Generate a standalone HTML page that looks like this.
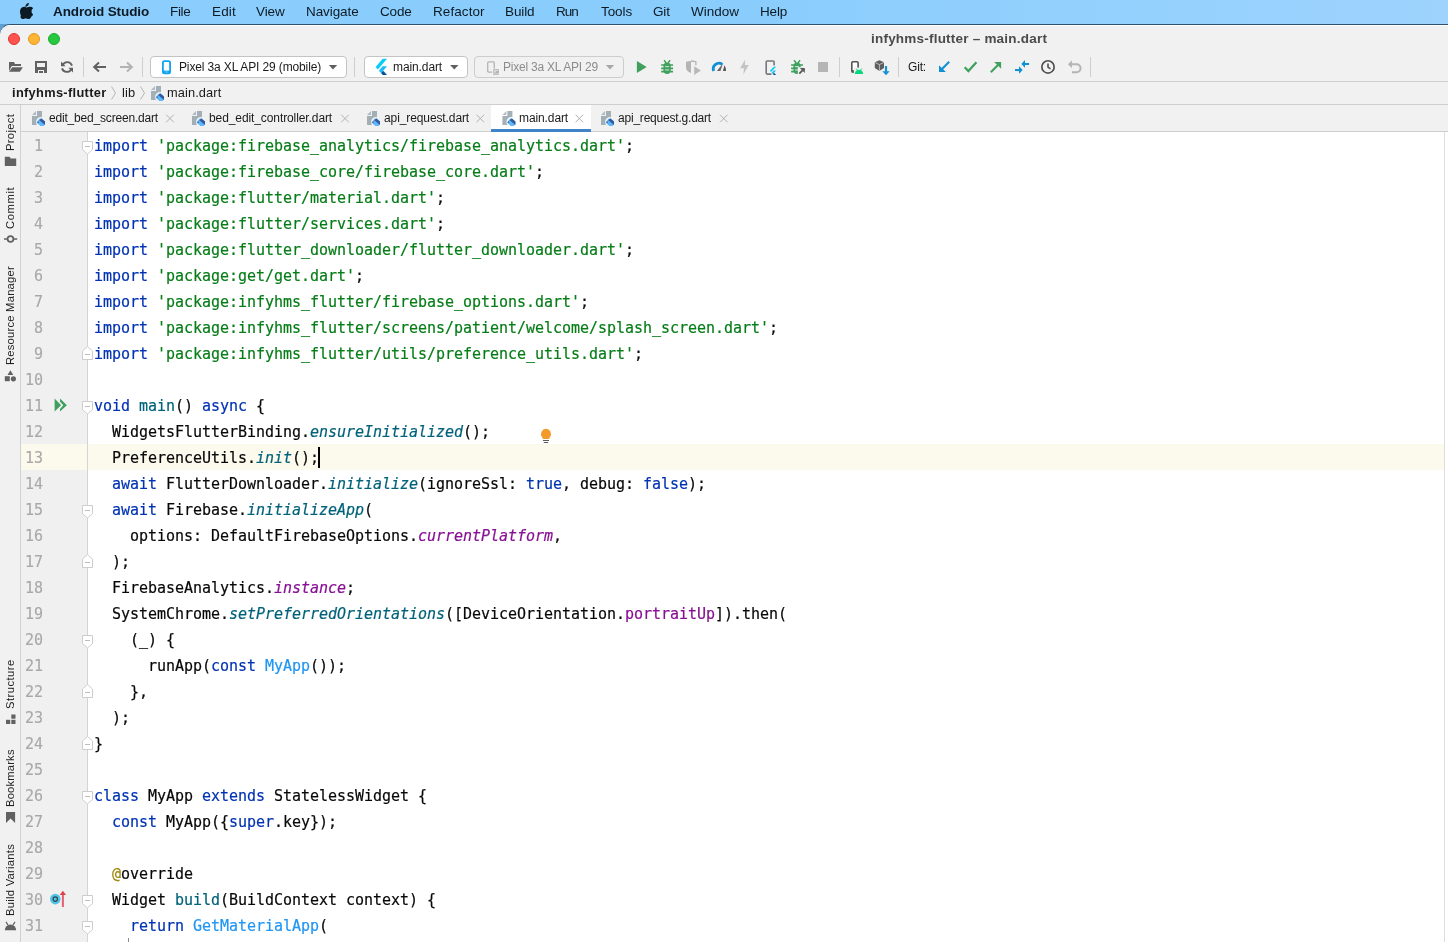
<!DOCTYPE html>
<html lang="en"><head><meta charset="utf-8"><title>infyhms-flutter – main.dart</title>
<style>
*{box-sizing:border-box}
html,body{margin:0;padding:0}
body{width:1448px;height:942px;position:relative;overflow:hidden;background:#f2f2f2;font-family:"Liberation Sans",sans-serif;color:#1a1a1a;-webkit-font-smoothing:antialiased}
.abs{position:absolute}
.t,.vt,.ln,.cl{will-change:transform}
.t{position:absolute;white-space:pre;line-height:1}
#menubar{position:absolute;left:0;top:0;width:1448px;height:24px;background:linear-gradient(90deg,#8bcefd 0%,#89cdfd 50%,#9dd3fd 100%)}
#menubar .t{font-size:13.5px;color:#0d1a24;top:5px}
#wall{position:absolute;left:0;top:24px;width:1448px;height:14px;background:#5e9fd2}
#win{position:absolute;left:0;top:24px;width:1448px;height:918px;background:#f1f1f1;border-top-left-radius:10px;border-top-right-radius:0;border-top:1px solid #2d506e;overflow:hidden}
#win:before{content:"";position:absolute;left:0;top:0;width:100%;height:1px;background:#fff}
.hl{position:absolute;left:0;width:1448px;height:1px;background:#cecece}
.sep{position:absolute;width:1px;background:#cfcfcf;top:57px;height:20px}
.combo{position:absolute;top:56px;height:22px;border:1px solid #c4c4c4;border-radius:4px;background:#fff}
.ui{font-size:12.5px;color:#1a1a1a}
.vt{position:absolute;white-space:pre;font-size:12px;line-height:1;color:#1a1a1a;transform-origin:0 0;transform:rotate(-90deg)}
#gutter{position:absolute;left:21px;top:132px;width:66px;height:810px;background:#f0f0f0}
#gline{position:absolute;left:87px;top:132px;width:1px;height:810px;background:#d4d4d4}
#code{position:absolute;left:88px;top:132px;width:1356px;height:810px;background:#fff}
#rline{position:absolute;left:1444px;top:132px;width:1px;height:810px;background:#dedede}
#rbar{position:absolute;left:1445px;top:132px;width:3px;height:810px;background:#fff}
.ln{position:absolute;left:21px;width:22px;text-align:right;font:15px/26px "DejaVu Sans Mono",monospace;letter-spacing:-0.031px;color:#a8a8a8;height:26px;-webkit-text-stroke:0.15px}
.cl{position:absolute;left:94px;white-space:pre;font:15px/26px "DejaVu Sans Mono",monospace;letter-spacing:-0.031px;color:#080808;height:26px;-webkit-text-stroke:0.2px}
.k{color:#0033b3}.s{color:#067d17}.f{color:#00627a}.m{color:#00627a;font-style:italic}.p{color:#871094;font-style:italic}.e{color:#871094}.c{color:#2196f3}.a{color:#9e880d}
</style></head>
<body>
<div id="menubar"></div>
<div id="wall"></div>
<div id="win"></div>
<svg class="abs" style="left:19.800px;top:2.800px" width="13.600" height="16.200" viewBox="-1 0 171 206" preserveAspectRatio="none"><path fill="#0d1a24" d="M150.4 160.6c-3.100 7.200-6.800 13.800-11.100 19.900-5.900 8.300-10.700 14.100-14.400 17.300-5.700 5.300-11.900 8-18.500 8.100-4.700 0-10.400-1.300-17.100-4.100-6.700-2.700-12.800-4.100-18.400-4.100-5.900 0-12.200 1.300-18.900 4.100-6.700 2.700-12.200 4.200-16.300 4.300-6.300.3-12.600-2.500-18.900-8.400-4-3.500-9-9.500-15.100-18C15.200 170.500 9.900 160 5.700 148 1.200 135 -1 122.500 -1 110.300c0-13.900 3-25.900 9-36 4.700-8.100 11-14.400 18.800-19.100 7.800-4.700 16.300-7 25.400-7.200 5 0 11.600 1.500 19.700 4.600 8.100 3 13.300 4.600 15.600 4.600 1.700 0 7.500-1.800 17.300-5.400 9.300-3.300 17.100-4.700 23.500-4.200 17.400 1.400 30.400 8.200 39.100 20.600-15.500 9.400-23.200 22.600-23.100 39.500.1 13.200 4.900 24.100 14.300 32.800 4.300 4 9 7.200 14.300 9.400-1.100 3.300-2.400 6.500-3.600 9.600zM110.600 4.100c0 10.300-3.800 20-11.300 28.900-9.100 10.600-20 16.700-31.900 15.700-.2-1.200-.200-2.500-.200-3.900 0-9.900 4.300-20.500 12-29.200 3.800-4.400 8.700-8 14.600-10.900C99.700 1.800 105.300.2 110.500 0c.1 1.400.1 2.700.1 4.100z"/></svg>
<div class="abs" style="left:8px;top:33px;width:12px;height:12px;border-radius:6px;background:#fe5450;border:0.5px solid #e0352f"></div>
<div class="abs" style="left:28px;top:33px;width:12px;height:12px;border-radius:6px;background:#feb436;border:0.5px solid #de9b1c"></div>
<div class="abs" style="left:48px;top:33px;width:12px;height:12px;border-radius:6px;background:#27c83f;border:0.5px solid #1aab29"></div>
<div class="hl" style="top:81px"></div>
<div class="hl" style="top:104px"></div>
<div class="hl" style="top:131px;left:21px;width:1427px"></div>
<div class="sep" style="left:83px"></div>
<div class="sep" style="left:142px"></div>
<div class="sep" style="left:354px"></div>
<div class="sep" style="left:839px"></div>
<div class="sep" style="left:898px"></div>
<div class="sep" style="left:1090px"></div>
<div class="combo" style="left:150px;width:197px"></div>
<div class="combo" style="left:364px;width:104px"></div>
<div class="combo" style="left:474px;width:150px;background:#f1f1f1;border-color:#cdcdcd"></div>
<div class="abs" style="left:491px;top:105px;width:100px;height:26px;background:#fff"></div>
<div class="abs" style="left:491px;top:129px;width:100px;height:3px;background:#4083c9"></div>
<div class="abs" style="left:20px;top:105px;width:1px;height:837px;background:#d1d1d1"></div>
<div class="t" style="left:53.00px;top:4.74px;font-size:13.5px;font-weight:700;color:#0d1a24;letter-spacing:-0.099px;">Android Studio</div>
<div class="t" style="left:170.00px;top:4.74px;font-size:13.5px;font-weight:400;color:#0d1a24;letter-spacing:-0.355px;">File</div>
<div class="t" style="left:211.50px;top:4.74px;font-size:13.5px;font-weight:400;color:#0d1a24;letter-spacing:0.145px;">Edit</div>
<div class="t" style="left:256.00px;top:4.74px;font-size:13.5px;font-weight:400;color:#0d1a24;letter-spacing:-0.110px;">View</div>
<div class="t" style="left:306.00px;top:4.74px;font-size:13.5px;font-weight:400;color:#0d1a24;letter-spacing:-0.085px;">Navigate</div>
<div class="t" style="left:380.20px;top:4.74px;font-size:13.5px;font-weight:400;color:#0d1a24;letter-spacing:-0.160px;">Code</div>
<div class="t" style="left:432.70px;top:4.74px;font-size:13.5px;font-weight:400;color:#0d1a24;letter-spacing:0.081px;">Refactor</div>
<div class="t" style="left:505.40px;top:4.74px;font-size:13.5px;font-weight:400;color:#0d1a24;letter-spacing:-0.108px;">Build</div>
<div class="t" style="left:556.40px;top:4.74px;font-size:13.5px;font-weight:400;color:#0d1a24;letter-spacing:-1.033px;">Run</div>
<div class="t" style="left:600.50px;top:4.74px;font-size:13.5px;font-weight:400;color:#0d1a24;letter-spacing:-0.079px;">Tools</div>
<div class="t" style="left:653.00px;top:4.74px;font-size:13.5px;font-weight:400;color:#0d1a24;letter-spacing:-0.183px;">Git</div>
<div class="t" style="left:691.00px;top:4.74px;font-size:13.5px;font-weight:400;color:#0d1a24;letter-spacing:-0.023px;">Window</div>
<div class="t" style="left:760.00px;top:4.74px;font-size:13.5px;font-weight:400;color:#0d1a24;letter-spacing:-0.189px;">Help</div>
<div class="t" style="left:871.00px;top:31.94px;font-size:13.5px;font-weight:700;color:#4b4b4b;letter-spacing:0.216px;">infyhms-flutter – main.dart</div>
<div class="t" style="left:178.50px;top:60.90px;font-size:12px;font-weight:400;color:#1a1a1a;letter-spacing:-0.132px;">Pixel 3a XL API 29 (mobile)</div>
<div class="t" style="left:392.50px;top:60.90px;font-size:12px;font-weight:400;color:#1a1a1a;letter-spacing:-0.104px;">main.dart</div>
<div class="t" style="left:502.50px;top:60.90px;font-size:12px;font-weight:400;color:#8c8c8c;letter-spacing:-0.221px;">Pixel 3a XL API 29</div>
<div class="t" style="left:907.50px;top:60.90px;font-size:12px;font-weight:400;color:#1a1a1a;letter-spacing:-0.157px;">Git:</div>
<div class="t" style="left:11.50px;top:86.74px;font-size:12.8px;font-weight:700;color:#1a1a1a;letter-spacing:0.329px;">infyhms-flutter</div>
<div class="t" style="left:121.50px;top:86.74px;font-size:12.8px;font-weight:400;color:#1a1a1a;letter-spacing:0.194px;">lib</div>
<div class="t" style="left:166.50px;top:86.74px;font-size:12.8px;font-weight:400;color:#1a1a1a;letter-spacing:0.107px;">main.dart</div>
<div class="t" style="left:48.50px;top:111.60px;font-size:12px;font-weight:400;color:#1a1a1a;letter-spacing:-0.187px;">edit_bed_screen.dart</div>
<div class="t" style="left:208.50px;top:111.60px;font-size:12px;font-weight:400;color:#1a1a1a;letter-spacing:-0.097px;">bed_edit_controller.dart</div>
<div class="t" style="left:383.50px;top:111.60px;font-size:12px;font-weight:400;color:#1a1a1a;letter-spacing:-0.102px;">api_request.dart</div>
<div class="t" style="left:518.50px;top:111.60px;font-size:12px;font-weight:400;color:#1a1a1a;letter-spacing:-0.104px;">main.dart</div>
<div class="t" style="left:617.50px;top:111.60px;font-size:12px;font-weight:400;color:#1a1a1a;letter-spacing:-0.208px;">api_request.g.dart</div>
<div class="vt" style="left:4.600px;top:150.50px;font-size:11.2px;letter-spacing:0.329px">Project</div>
<div class="vt" style="left:4.600px;top:228.90px;font-size:11.2px;letter-spacing:0.611px">Commit</div>
<div class="vt" style="left:4.600px;top:364.90px;font-size:11.2px;letter-spacing:0.236px">Resource Manager</div>
<div class="vt" style="left:4.600px;top:708.60px;font-size:11.2px;letter-spacing:0.476px">Structure</div>
<div class="vt" style="left:4.600px;top:806.50px;font-size:11.2px;letter-spacing:0.191px">Bookmarks</div>
<div class="vt" style="left:4.600px;top:915.90px;font-size:11.2px;letter-spacing:0.277px">Build Variants</div>
<div id="gutter"></div><div id="code"></div><div id="gline"></div><div id="rline"></div><div id="rbar"></div>
<div class="abs" style="left:21px;top:444px;width:66px;height:26px;background:#fcfaed"></div>
<div class="abs" style="left:88px;top:444px;width:1356px;height:26px;background:#fcfaed"></div>
<div class="ln" style="top:133px">1</div>
<div class="cl" style="top:133px"><span class="k">import</span> <span class="s">'package:firebase_analytics/firebase_analytics.dart'</span>;</div>
<div class="ln" style="top:159px">2</div>
<div class="cl" style="top:159px"><span class="k">import</span> <span class="s">'package:firebase_core/firebase_core.dart'</span>;</div>
<div class="ln" style="top:185px">3</div>
<div class="cl" style="top:185px"><span class="k">import</span> <span class="s">'package:flutter/material.dart'</span>;</div>
<div class="ln" style="top:211px">4</div>
<div class="cl" style="top:211px"><span class="k">import</span> <span class="s">'package:flutter/services.dart'</span>;</div>
<div class="ln" style="top:237px">5</div>
<div class="cl" style="top:237px"><span class="k">import</span> <span class="s">'package:flutter_downloader/flutter_downloader.dart'</span>;</div>
<div class="ln" style="top:263px">6</div>
<div class="cl" style="top:263px"><span class="k">import</span> <span class="s">'package:get/get.dart'</span>;</div>
<div class="ln" style="top:289px">7</div>
<div class="cl" style="top:289px"><span class="k">import</span> <span class="s">'package:infyhms_flutter/firebase_options.dart'</span>;</div>
<div class="ln" style="top:315px">8</div>
<div class="cl" style="top:315px"><span class="k">import</span> <span class="s">'package:infyhms_flutter/screens/patient/welcome/splash_screen.dart'</span>;</div>
<div class="ln" style="top:341px">9</div>
<div class="cl" style="top:341px"><span class="k">import</span> <span class="s">'package:infyhms_flutter/utils/preference_utils.dart'</span>;</div>
<div class="ln" style="top:367px">10</div>
<div class="ln" style="top:393px">11</div>
<div class="cl" style="top:393px"><span class="k">void</span> <span class="f">main</span>() <span class="k">async</span> {</div>
<div class="ln" style="top:419px">12</div>
<div class="cl" style="top:419px">  WidgetsFlutterBinding.<span class="m">ensureInitialized</span>();</div>
<div class="ln" style="top:445px">13</div>
<div class="cl" style="top:445px">  PreferenceUtils.<span class="m">init</span>();</div>
<div class="ln" style="top:471px">14</div>
<div class="cl" style="top:471px">  <span class="k">await</span> FlutterDownloader.<span class="m">initialize</span>(ignoreSsl: <span class="k">true</span>, debug: <span class="k">false</span>);</div>
<div class="ln" style="top:497px">15</div>
<div class="cl" style="top:497px">  <span class="k">await</span> Firebase.<span class="m">initializeApp</span>(</div>
<div class="ln" style="top:523px">16</div>
<div class="cl" style="top:523px">    options: DefaultFirebaseOptions.<span class="p">currentPlatform</span>,</div>
<div class="ln" style="top:549px">17</div>
<div class="cl" style="top:549px">  );</div>
<div class="ln" style="top:575px">18</div>
<div class="cl" style="top:575px">  FirebaseAnalytics.<span class="p">instance</span>;</div>
<div class="ln" style="top:601px">19</div>
<div class="cl" style="top:601px">  SystemChrome.<span class="m">setPreferredOrientations</span>([DeviceOrientation.<span class="e">portraitUp</span>]).then(</div>
<div class="ln" style="top:627px">20</div>
<div class="cl" style="top:627px">    (_) {</div>
<div class="ln" style="top:653px">21</div>
<div class="cl" style="top:653px">      runApp(<span class="k">const</span> <span class="c">MyApp</span>());</div>
<div class="ln" style="top:679px">22</div>
<div class="cl" style="top:679px">    },</div>
<div class="ln" style="top:705px">23</div>
<div class="cl" style="top:705px">  );</div>
<div class="ln" style="top:731px">24</div>
<div class="cl" style="top:731px">}</div>
<div class="ln" style="top:757px">25</div>
<div class="ln" style="top:783px">26</div>
<div class="cl" style="top:783px"><span class="k">class</span> MyApp <span class="k">extends</span> StatelessWidget {</div>
<div class="ln" style="top:809px">27</div>
<div class="cl" style="top:809px">  <span class="k">const</span> MyApp({<span class="k">super</span>.key});</div>
<div class="ln" style="top:835px">28</div>
<div class="ln" style="top:861px">29</div>
<div class="cl" style="top:861px">  <span class="a">@</span>override</div>
<div class="ln" style="top:887px">30</div>
<div class="cl" style="top:887px">  Widget <span class="f">build</span>(BuildContext context) {</div>
<div class="ln" style="top:913px">31</div>
<div class="cl" style="top:913px">    <span class="k">return</span> <span class="c">GetMaterialApp</span>(</div>
<div class="abs" style="left:318px;top:447px;width:2px;height:21px;background:#000"></div>
<div class="abs" style="left:128px;top:938px;width:1px;height:4px;background:#8a8a8a"></div>
<svg class="abs" style="left:0;top:0" width="1448" height="942" viewBox="0 0 1448 942">
<path d="M9 62h5l1 2h6v2h-9.300l-2.700 5z" fill="#616161"/><path d="M12.300 67.300h10.600l-3 4.400H9z" fill="#616161"/>
<path d="M35 61h12v12H35z M37 63v4h8v-4z M38 70v3h6v-3z" fill="#616161" fill-rule="evenodd"/><rect x="39" y="71" width="4" height="2" fill="#616161"/>
<g fill="none" stroke="#616161" stroke-width="1.900"><path d="M62.600 65.200A5 5 0 0 1 72 65.600"/><path d="M71.400 68.800A5 5 0 0 1 62 68.400"/></g><path d="M61 61.400v4.800h4.600z" fill="#616161"/><path d="M73 72.600v-4.800h-4.600z" fill="#616161"/>
<path d="M106 67H94.500M99 62.600L94.200 67l4.800 4.400" fill="none" stroke="#616161" stroke-width="2"/>
<path d="M120 67h11.500M127 62.600l4.800 4.400-4.800 4.400" fill="none" stroke="#b2b2b2" stroke-width="2"/>
<rect x="162.900" y="61.100" width="7.200" height="12.200" rx="1.600" fill="#fff" stroke="#0fa4f0" stroke-width="1.800"/><rect x="163" y="70.600" width="7" height="2.800" fill="#0fa4f0"/><rect x="165.600" y="71.600" width="1.800" height=".8" fill="#bfe6fb"/>
<path d="M328.8 65h8.400l-4.200 4.600z" fill="#5f5f5f"/>
<path d="M450.1 65h8.400l-4.200 4.600z" fill="#5f5f5f"/>
<path d="M605.8 65h8.400l-4.200 4.600z" fill="#a9a9a9"/>
<g transform="translate(375.6 58.8) scale(0.59 0.675) translate(-2.300 0)"><path d="M14.314 0L2.300 12 6 15.700 21.684.013z" fill="#05cdf9"/><path d="M14.328 11.072L7.857 17.530l3.690 3.690L21.700 11.072z" fill="#17bbfc"/><path d="M11.547 21.220L14.327 24H21.700l-6.460-6.468z" fill="#02539a"/></g>
<path d="M494.300 68.500V63a1.100 1.100 0 0 0-1.100-1.100h-4.400a1.100 1.100 0 0 0-1.100 1.100v8a1.100 1.100 0 0 0 1.100 1.100h3.400" fill="none" stroke="#b4b4b4" stroke-width="1.300"/><rect x="493.800" y="69.700" width="4.500" height="3.300" fill="none" stroke="#b4b4b4" stroke-width="1.100"/><rect x="495.500" y="71" width="2.600" height="2" fill="#b4b4b4"/><rect x="493" y="73.800" width="5.800" height="1" fill="#b4b4b4"/>
<path d="M636.900 61v11.900l9.800-6z" fill="#40a05e"/>
<g transform="translate(0.05 0)"><rect x="663.400" y="62.500" width="7.300" height="11.400" rx="3.600" fill="#40a05e"/><g stroke="#40a05e" stroke-width="1.500" fill="none"><path d="M664 60.300l2.200 2.700M670.100 60.300l-2.200 2.700"/></g><g stroke="#40a05e" stroke-width="1.700" fill="none"><path d="M661.100 65h11.900M661.100 68.300h11.900M661.100 71.600h11.900"/></g><rect x="665.100" y="66.200" width="3.900" height=".9" fill="#e3f1e7"/><rect x="665.100" y="69.500" width="3.900" height=".9" fill="#e3f1e7"/></g>
<path d="M686 61.800q2.500-.8 5-.8v11.900q-5-1.600-5-6z" fill="#b4b4b4"/><path d="M691 61q2.500 0 4.900.8v3.400" fill="none" stroke="#b4b4b4" stroke-width="1.300"/><path d="M694.200 66.200v8.700l6.700-4.400z" fill="#b8b8b8"/>
<path d="M713.640 70.950A5.700 5.700 0 0 1 722.270 64.330" fill="none" stroke="#0f90d3" stroke-width="2.800"/><path d="M716.900 70.900l6.100-7.700-2.600 7.700z" fill="#666"/><path d="M724.300 65.200q1.900 2.400 1.800 5.700h-3.200q.900-2.700 1.400-5.700z" fill="#5a5a5a"/>
<path d="M745.200 59.500L740 68.300h4l-.7 6.100 5.500-9.300h-3.900z" fill="#c4c4c4"/>
<path d="M774.100 65.400V62a1 1 0 0 0-1-1h-5.900a1 1 0 0 0-1 1v11.100a1 1 0 0 0 1 1h4.300" fill="none" stroke="#75787d" stroke-width="1.600"/>
<g transform="translate(769.9 66.7) scale(0.32 0.342) translate(-2.300 0)"><path d="M14.314 0L2.300 12 6 15.700 21.684.013z" fill="#05cdf9"/><path d="M14.328 11.072L7.857 17.530l3.690 3.690L21.700 11.072z" fill="#17bbfc"/><path d="M11.547 21.220L14.327 24H21.700l-6.460-6.468z" fill="#02539a"/></g>
<g transform="translate(130 0)"><rect x="663.400" y="62.500" width="7.300" height="11.400" rx="3.600" fill="#40a05e"/><g stroke="#40a05e" stroke-width="1.500" fill="none"><path d="M664 60.300l2.200 2.700M670.100 60.300l-2.200 2.700"/></g><g stroke="#40a05e" stroke-width="1.700" fill="none"><path d="M661.100 65h11.900M661.100 68.300h11.900M661.100 71.600h11.900"/></g><rect x="665.100" y="66.200" width="3.900" height=".9" fill="#e3f1e7"/><rect x="665.100" y="69.500" width="3.900" height=".9" fill="#e3f1e7"/></g>
<path d="M797.800 67.200h8v8h-8z" fill="#f1f1f1"/>
<path d="M799.300 73.600L804 68.900" stroke="#5a5a5a" stroke-width="1.900" fill="none"/><path d="M799.800 68h5v5z" fill="#5a5a5a"/>
<rect x="818" y="62" width="10" height="10" fill="#b5b5b5"/>
<rect x="851.800" y="61.800" width="6.300" height="10.300" rx="1.200" fill="#fff" stroke="#555" stroke-width="1.600"/><path d="M851.800 70h3v2.100h-2z" fill="#555"/><path d="M853.800 67.600h10v7h-10z" fill="#f1f1f1"/><path d="M854.800 73.900a4.150 4.100 0 0 1 8.300 0z" fill="#07d77c"/><path d="M856.300 68.600l1.300 2M861.600 68.600l-1.300 2" stroke="#07d77c" stroke-width="1"/>
<path d="M879.400 60.200l4.600 2v5.900l-4.600 2.800-4.600-2.800v-5.900z" fill="#5e5e5e"/><path d="M874.800 62.400l4.600 2.200 4.600-2.200M879.400 64.600v6.200" fill="none" stroke="#d0d0d0" stroke-width=".8"/><path d="M881.300 65.600h9v10h-9z" fill="#f1f1f1" opacity="0"/><path d="M886 66v6" stroke="#1592d1" stroke-width="2.200"/><path d="M882.300 71.300h7.400l-3.700 3.900z" fill="#1592d1"/>
<path d="M949.200 61.800L942 69" stroke="#0f90d3" stroke-width="2.100"/><path d="M939 65.200v6.700h6.900z" fill="#0f90d3"/>
<path d="M964.700 67.300l3.700 3.800 8-8.900" fill="none" stroke="#40a05e" stroke-width="2.300"/>
<path d="M990.800 72.200L998 65" stroke="#40a05e" stroke-width="2.100"/><path d="M994.200 62h6.900v6.700z" fill="#40a05e"/>
<path d="M1029.100 64h-5" stroke="#0f90d3" stroke-width="2"/><path d="M1021.300 64l3.700-3.900v7.600z" fill="#0f90d3"/><path d="M1015 70.050h5" stroke="#0f90d3" stroke-width="2"/><path d="M1022.700 70.050l-3.700 3.800v-7.600z" fill="#0f90d3"/>
<circle cx="1048" cy="66.900" r="6.150" fill="none" stroke="#4f4f4f" stroke-width="1.700"/><path d="M1048 63.600v3.600l2.500 1.700" fill="none" stroke="#4f4f4f" stroke-width="1.600"/>
<path d="M1071 64.300h5.600a3.950 3.950 0 0 1 0 7.900H1072" fill="none" stroke="#b4b4b4" stroke-width="2"/><path d="M1068 64.300l3.800-4v8z" fill="#b4b4b4"/>
<g transform="translate(151 86)"><path d="M5 0h5v14H0V5h5z" fill="#9aa7b0" opacity=".9"/><path d="M0 4l4-4v4z" fill="#9aa7b0" opacity=".75"/><circle cx="9" cy="11" r="4.900" fill="#f1f1f1"/><path d="M4.900 11.400L7.400 8l1.900-1 3.700 3.400v3L11.400 15H8.300z" fill="#5cb7fb"/><path d="M7 8.900l2.600-1.200L13 10.400v3.500z" fill="#35599a"/><path d="M4.900 11.400l1.500-1.900.4 3.100z" fill="#3f6fb5"/></g>
<g transform="translate(32 111)"><path d="M5 0h5v14H0V5h5z" fill="#9aa7b0" opacity=".9"/><path d="M0 4l4-4v4z" fill="#9aa7b0" opacity=".75"/><circle cx="9" cy="11" r="4.900" fill="#f1f1f1"/><path d="M4.900 11.400L7.400 8l1.900-1 3.700 3.400v3L11.400 15H8.300z" fill="#5cb7fb"/><path d="M7 8.900l2.600-1.200L13 10.400v3.500z" fill="#35599a"/><path d="M4.900 11.400l1.500-1.900.4 3.100z" fill="#3f6fb5"/></g>
<g transform="translate(192 111)"><path d="M5 0h5v14H0V5h5z" fill="#9aa7b0" opacity=".9"/><path d="M0 4l4-4v4z" fill="#9aa7b0" opacity=".75"/><circle cx="9" cy="11" r="4.900" fill="#f1f1f1"/><path d="M4.900 11.400L7.400 8l1.900-1 3.700 3.400v3L11.400 15H8.300z" fill="#5cb7fb"/><path d="M7 8.900l2.600-1.200L13 10.400v3.500z" fill="#35599a"/><path d="M4.900 11.400l1.500-1.900.4 3.100z" fill="#3f6fb5"/></g>
<g transform="translate(367 111)"><path d="M5 0h5v14H0V5h5z" fill="#9aa7b0" opacity=".9"/><path d="M0 4l4-4v4z" fill="#9aa7b0" opacity=".75"/><circle cx="9" cy="11" r="4.900" fill="#f1f1f1"/><path d="M4.900 11.400L7.400 8l1.900-1 3.700 3.400v3L11.400 15H8.300z" fill="#5cb7fb"/><path d="M7 8.900l2.600-1.200L13 10.400v3.500z" fill="#35599a"/><path d="M4.900 11.400l1.500-1.900.4 3.100z" fill="#3f6fb5"/></g>
<g transform="translate(502.4 111)"><path d="M5 0h5v14H0V5h5z" fill="#9aa7b0" opacity=".9"/><path d="M0 4l4-4v4z" fill="#9aa7b0" opacity=".75"/><circle cx="9" cy="11" r="4.900" fill="#fff"/><path d="M4.900 11.400L7.400 8l1.900-1 3.700 3.400v3L11.400 15H8.300z" fill="#5cb7fb"/><path d="M7 8.900l2.600-1.200L13 10.400v3.500z" fill="#35599a"/><path d="M4.900 11.400l1.500-1.900.4 3.100z" fill="#3f6fb5"/></g>
<g transform="translate(601 111)"><path d="M5 0h5v14H0V5h5z" fill="#9aa7b0" opacity=".9"/><path d="M0 4l4-4v4z" fill="#9aa7b0" opacity=".75"/><circle cx="9" cy="11" r="4.900" fill="#f1f1f1"/><path d="M4.900 11.400L7.400 8l1.900-1 3.700 3.400v3L11.400 15H8.300z" fill="#5cb7fb"/><path d="M7 8.900l2.600-1.200L13 10.400v3.500z" fill="#35599a"/><path d="M4.900 11.400l1.500-1.900.4 3.100z" fill="#3f6fb5"/></g>
<path d="M166.2 114.700l7.600 7.600M173.8 114.700l-7.600 7.600" stroke="#b0b0b0" stroke-width="1" fill="none"/>
<path d="M341.2 114.700l7.600 7.600M348.8 114.700l-7.600 7.600" stroke="#b0b0b0" stroke-width="1" fill="none"/>
<path d="M476.5 114.700l7.600 7.600M484.1 114.700l-7.600 7.600" stroke="#b0b0b0" stroke-width="1" fill="none"/>
<path d="M575.5 114.700l7.600 7.600M583.1 114.700l-7.600 7.600" stroke="#b0b0b0" stroke-width="1" fill="none"/>
<path d="M720 114.700l7.600 7.600M727.6 114.700l-7.600 7.600" stroke="#b0b0b0" stroke-width="1" fill="none"/>
<path d="M111.5 86.500l4 6.500-4 6.500" fill="none" stroke="#b4b4b4" stroke-width="1"/>
<path d="M140.5 86.500l4 6.500-4 6.500" fill="none" stroke="#b4b4b4" stroke-width="1"/>
<path d="M4.800 156.800h4.700l1.300 1.800h5.400v7.400H4.800z" fill="#616161"/>
<circle cx="10.500" cy="239" r="2.900" fill="none" stroke="#616161" stroke-width="1.700"/><path d="M4 239h3.600M13.400 239h3.800" stroke="#616161" stroke-width="1.700"/>
<path d="M10.400 370.300l2.900 4.700H7.500z" fill="#616161"/><rect x="4.800" y="376.200" width="5" height="5" fill="#616161"/><circle cx="13.400" cy="378.800" r="2.600" fill="#616161"/>
<rect x="11.300" y="714.500" width="4.200" height="4.200" fill="#616161"/><rect x="6" y="719.800" width="4.200" height="4.200" fill="#616161"/><rect x="11.300" y="719.800" width="4.200" height="4.200" fill="#616161"/>
<path d="M6 812h9.100v11l-4.550-4.400L6 823z" fill="#616161"/>
<path d="M4.800 930.300a5.700 5.900 0 0 1 11.400 0z" fill="#616161"/><path d="M6 921.900l2 3.200M15 921.900l-2 3.200" stroke="#616161" stroke-width="1.200"/>
<path d="M54.600 398.500v13l6.500-6.200z" fill="#3f9f5e"/><path d="M60 398.500l6.900 6.800-6.900 6.200v-2.500l3.300-3.700-3.300-3.600z" fill="#3f9f5e"/>
<circle cx="55.300" cy="899.100" r="5.300" fill="#52c3e6"/><circle cx="55.300" cy="899.100" r="2.200" fill="none" stroke="#2f4550" stroke-width="1.200"/><path d="M62.900 894.600V907" stroke="#e4606c" stroke-width="2"/><path d="M59.700 894.900l3.200-4.100 3.200 4.100z" fill="#e0414f"/>
<path d="M546 428.800a5.050 5.050 0 0 1 3.900 8.200l-.9 1.900h-6l-.9-1.900a5.050 5.050 0 0 1 3.900-8.200z" fill="#f29a2a"/><path d="M543 440.500h6M543.800 442.500h4.400" stroke="#5a5a5a" stroke-width="1"/>
<path d="M82.500 141.5h10v8l-5 4.500-5-4.500z" fill="#fff" stroke="#cdcdcd"/><path d="M85 146.5h5" stroke="#bdbdbd"/>
<path d="M82.500 359.5h10v-8.500l-5-4.500-5 4.500z" fill="#fff" stroke="#cdcdcd"/><path d="M85 354.5h5" stroke="#bdbdbd"/>
<path d="M82.500 401.5h10v8l-5 4.500-5-4.500z" fill="#fff" stroke="#cdcdcd"/><path d="M85 406.5h5" stroke="#bdbdbd"/>
<path d="M82.500 505.5h10v8l-5 4.500-5-4.500z" fill="#fff" stroke="#cdcdcd"/><path d="M85 510.5h5" stroke="#bdbdbd"/>
<path d="M82.500 567.5h10v-8.500l-5-4.500-5 4.500z" fill="#fff" stroke="#cdcdcd"/><path d="M85 562.5h5" stroke="#bdbdbd"/>
<path d="M82.500 635.5h10v8l-5 4.500-5-4.500z" fill="#fff" stroke="#cdcdcd"/><path d="M85 640.5h5" stroke="#bdbdbd"/>
<path d="M82.500 697.5h10v-8.500l-5-4.500-5 4.500z" fill="#fff" stroke="#cdcdcd"/><path d="M85 692.5h5" stroke="#bdbdbd"/>
<path d="M82.500 749.5h10v-8.500l-5-4.500-5 4.500z" fill="#fff" stroke="#cdcdcd"/><path d="M85 744.5h5" stroke="#bdbdbd"/>
<path d="M82.500 791.5h10v8l-5 4.500-5-4.500z" fill="#fff" stroke="#cdcdcd"/><path d="M85 796.5h5" stroke="#bdbdbd"/>
<path d="M82.500 895.5h10v8l-5 4.500-5-4.500z" fill="#fff" stroke="#cdcdcd"/><path d="M85 900.5h5" stroke="#bdbdbd"/>
<path d="M82.500 921.5h10v8l-5 4.500-5-4.500z" fill="#fff" stroke="#cdcdcd"/><path d="M85 926.5h5" stroke="#bdbdbd"/>
</svg>
</body></html>
